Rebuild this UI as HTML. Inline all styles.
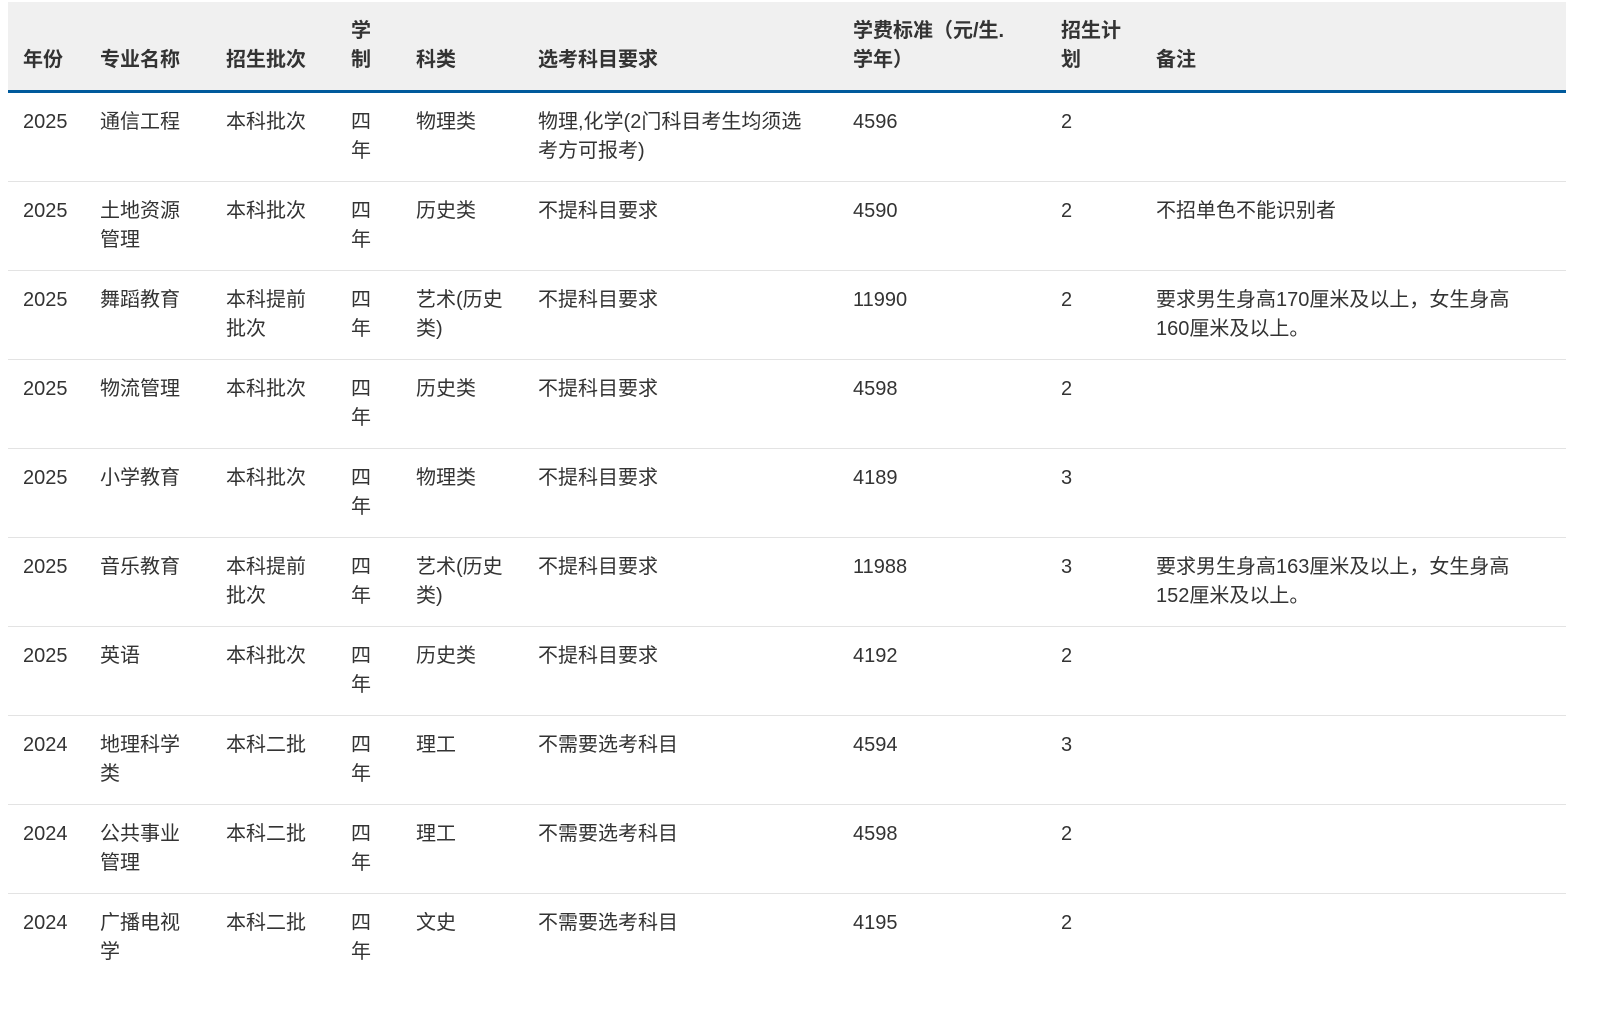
<!DOCTYPE html>
<html><head><meta charset="utf-8"><style>
html,body{margin:0;padding:0;background:#fff;width:1598px;height:1018px;overflow:hidden}
table{position:absolute;left:8px;top:2px;width:1558px;border-collapse:collapse;table-layout:fixed;font-family:"Liberation Sans","Noto Sans CJK SC",sans-serif;font-size:20px;line-height:29px;color:#333}
th{background:#f0f0f0;font-weight:bold;text-align:left;vertical-align:bottom;padding:15px 0 15px 15px;height:58px;border-bottom:3px solid #005a9c;color:#333}
td{vertical-align:top;padding:15px 0 15px 15px;height:58px;border-bottom:1px solid #e3e3e3;white-space:nowrap}
tr:last-child td{border-bottom:none}
</style></head><body>
<table>
<colgroup><col style="width:77px"><col style="width:126px"><col style="width:125px"><col style="width:65px"><col style="width:122px"><col style="width:315px"><col style="width:208px"><col style="width:95px"><col style="width:425px"></colgroup>
<tr><th>年份</th><th>专业名称</th><th>招生批次</th><th>学<br>制</th><th>科类</th><th>选考科目要求</th><th>学费标准（元/生.<br>学年）</th><th>招生计<br>划</th><th>备注</th></tr>
<tr><td>2025</td><td>通信工程</td><td>本科批次</td><td>四<br>年</td><td>物理类</td><td>物理,化学(2门科目考生均须选<br>考方可报考)</td><td>4596</td><td>2</td><td></td></tr>
<tr><td>2025</td><td>土地资源<br>管理</td><td>本科批次</td><td>四<br>年</td><td>历史类</td><td>不提科目要求</td><td>4590</td><td>2</td><td>不招单色不能识别者</td></tr>
<tr><td>2025</td><td>舞蹈教育</td><td>本科提前<br>批次</td><td>四<br>年</td><td>艺术(历史<br>类)</td><td>不提科目要求</td><td>11990</td><td>2</td><td>要求男生身高170厘米及以上，女生身高<br>160厘米及以上。</td></tr>
<tr><td>2025</td><td>物流管理</td><td>本科批次</td><td>四<br>年</td><td>历史类</td><td>不提科目要求</td><td>4598</td><td>2</td><td></td></tr>
<tr><td>2025</td><td>小学教育</td><td>本科批次</td><td>四<br>年</td><td>物理类</td><td>不提科目要求</td><td>4189</td><td>3</td><td></td></tr>
<tr><td>2025</td><td>音乐教育</td><td>本科提前<br>批次</td><td>四<br>年</td><td>艺术(历史<br>类)</td><td>不提科目要求</td><td>11988</td><td>3</td><td>要求男生身高163厘米及以上，女生身高<br>152厘米及以上。</td></tr>
<tr><td>2025</td><td>英语</td><td>本科批次</td><td>四<br>年</td><td>历史类</td><td>不提科目要求</td><td>4192</td><td>2</td><td></td></tr>
<tr><td>2024</td><td>地理科学<br>类</td><td>本科二批</td><td>四<br>年</td><td>理工</td><td>不需要选考科目</td><td>4594</td><td>3</td><td></td></tr>
<tr><td>2024</td><td>公共事业<br>管理</td><td>本科二批</td><td>四<br>年</td><td>理工</td><td>不需要选考科目</td><td>4598</td><td>2</td><td></td></tr>
<tr><td>2024</td><td>广播电视<br>学</td><td>本科二批</td><td>四<br>年</td><td>文史</td><td>不需要选考科目</td><td>4195</td><td>2</td><td></td></tr>
</table>
</body></html>
